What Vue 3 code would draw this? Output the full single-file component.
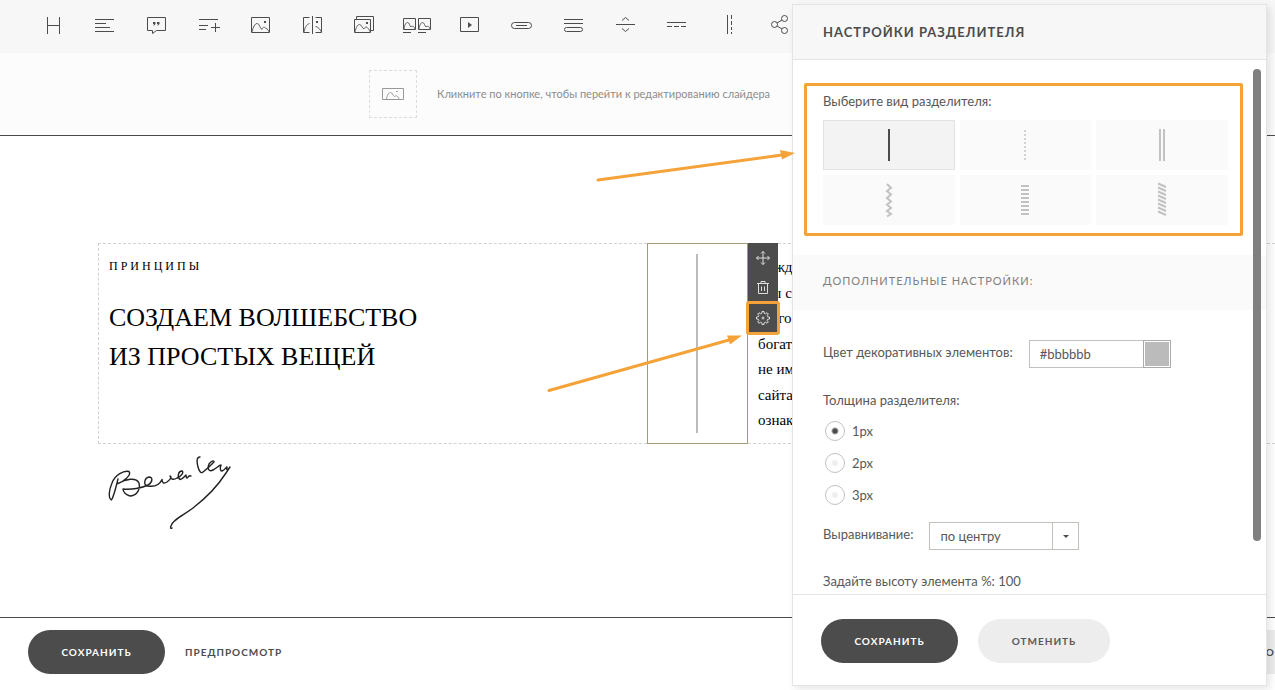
<script setup>
import { ref } from 'vue'

const tools = [
  { name: 'Заголовок', d: 'M10.5 4V21M22.5 4V21M10.5 12.5H22.5' },
  { name: 'Текст', d: 'M6 6.5H25M6 10.5H17M6 14.5H21M6 18.5H25' },
  { name: 'Цитата', d: 'M6.5 4.5H24.5V17.5H15.5L11.5 20.5V17.5H6.5Z', fill: 'M12 9H14.500V11L12.6 13L12.8 11H12ZM16 9H18.500V11L16.6 13L16.8 11H16Z' },
  { name: 'Список', d: 'M6 6.5H25M6 12.5H15M6 16.5H13M18 14.5H27M22.5 10V19' },
  { name: 'Картинка', d: 'M6.5 4.5H24.5V19.5H6.5Z', soft: 'M7 19C8 14 10 10.5 12 10.5C14.500 10.5 15 15.500 17 16.500C17.500 14.500 19 13.500 20.500 15C22.500 16 24 17.500 24 19', fill: 'M19 8H21V10H19Z' },
  { name: 'Сравнение', d: 'M12.500 4.5H6.5V19.5H12.500M15.5 3V21M18.500 4.5H24.500V19.5H18.500', soft: 'M7 19C8 14 9.500 11.500 12.500 10.500M18.500 13.500C21 13.500 23 16.500 24.500 19', fill: 'M19 8H21V10H19Z' },
  { name: 'Галерея', d: 'M5.5 6.5H21.5V19.5H5.5ZM7.5 6V3.5H24.5V17.5H22', soft: 'M6 19C7 14.500 8.500 11.500 10.500 11.500C12.500 11.500 13 15 15 16C16 13.500 18 13.500 19 15.500C20 16 21 17.500 21 19', fill: 'M17 9H19V11H17Z' },
  { name: 'Коллаж', d: 'M2.5 5.5H14.5V16.5H2.5ZM17.5 5.5H29.500V16.5H17.5ZM2 19.5H10M17 19.5H25', soft: 'M3 16C3.500 12 5 9.500 6.500 9.500C8.500 9.500 8.500 13 10 14C11.500 12.500 13.500 13.500 14 16M18 16C18.500 12 20 9.500 21.500 9.500C23.500 9.500 23.500 13 25 14C26.500 12.500 28.500 13.500 29 16' },
  { name: 'Видео', d: 'M7.5 4.5H25.5V18.5H7.5Z', fill: 'M15 9L19 12L15 15Z' },
  { name: 'Кнопка', d: 'M9.500 9.5H23.500A3 3 0 0 1 23.500 15.5H9.500A3 3 0 0 1 9.500 9.5ZM11 12.5H22' },
  { name: 'Аккордеон', d: 'M7 6.5H26M7 10.5H26M9.500 14.5H23.500A2 2 0 0 1 23.500 18.500H9.500A2 2 0 0 1 9.500 14.500Z' },
  { name: 'Отступ', d: 'M7 11.5H26M13 7.500L16.5 4.500L20 7.500M13 15.5L16.5 18.500L20 15.5' },
  { name: 'Горизонтальный разделитель', d: 'M6 9.5H25M6 13.5H11M13 13.5H18M20 13.5H25' },
  { name: 'Вертикальный разделитель', d: 'M14.5 2V21M18.5 2V6M18.500 8V12M18.5 14V17M18.5 19V21' },
  { name: 'Поделиться', d: 'M6.500 11.5A3 3 0 1 0 12.500 11.5A3 3 0 1 0 6.500 11.500M16.500 5.500A3 3 0 1 0 22.500 5.500A3 3 0 1 0 16.500 5.500M16.500 17.500A3 3 0 1 0 22.500 17.500A3 3 0 1 0 16.500 17.500M12 10L17 7M12 13L17 16' },
]

const dividers = [
  { id: 'solid', name: 'Сплошной', d: 'M12 2V34', w: 2 },
  { id: 'dotted', name: 'Точечный', d: 'M12 3V34', w: 2, dash: '2 2' },
  { id: 'double', name: 'Двойной', d: 'M10 2V34M14 2V34', w: 2 },
  { id: 'zigzag', name: 'Зигзаг', d: 'M10 2L14 6L10 9L14 12.500L10 16L14 19.500L10 22.500L14 26L10 29L14 32L10 34.500', w: 2 },
  { id: 'dashes', name: 'Штрихи', d: 'M12 3V34', w: 8, dash: '2 2' },
  { id: 'slanted', name: 'Наклонные штрихи', d: 'M8 1.500L16 5M8 5.500L16 9M8 9.500L16 13M8 13.500L16 17M8 17.500L16 21M8 21.500L16 25M8 25.500L16 29M8 29.500L16 33', w: 2 },
]

const kind = ref('solid')
const color = ref('#bbbbbb')
const thickness = ref('1px')
const align = ref('center')
const height = ref(100)
const lines = ['Кажд', 'Мы с', 'этого', 'богат', 'не им', 'сайта', 'ознак']
</script>

<template>
  <div class="page">
    <nav class="toolbar">
      <button v-for="t in tools" :key="t.name" type="button" class="tool" :aria-label="t.name">
        <svg width="32" height="24" viewBox="0 0 32 24">
          <path v-if="t.soft" class="soft" :d="t.soft" />
          <path class="line" :d="t.d" />
          <path v-if="t.fill" class="solid" :d="t.fill" />
        </svg>
      </button>
    </nav>

    <section class="slider">
      <button type="button" class="slide-btn" aria-label="Слайдер">
        <svg width="24" height="14" viewBox="0 0 24 14">
          <path d="M1.500 1.500H22.500V12.500H1.500Z" />
          <path d="M5.500 12C6 8 8 5.500 9.500 5.500C11.500 5.500 11.500 8.500 13.500 9.500C15 8 17 9 18 12" />
          <path d="M15 4.500H17" />
        </svg>
      </button>
      <p>Кликните по кнопке, чтобы перейти к редактированию слайдера</p>
    </section>

    <main class="canvas">
      <div class="row">
        <div class="col intro">
          <p class="kicker">ПРИНЦИПЫ</p>
          <h1>СОЗДАЕМ ВОЛШЕБСТВО<br>ИЗ ПРОСТЫХ ВЕЩЕЙ</h1>
        </div>
        <div class="col divider">
          <span class="rule"></span>
          <div class="menu">
            <button type="button" aria-label="Переместить">
              <svg width="16" height="16" viewBox="0 0 16 16"><path d="M8 1.500V14.500M1.500 8H14.500M6 3.500L8 1.500L10 3.500M6 12.500L8 14.500L10 12.500M3.500 6L1.500 8L3.500 10M12.500 6L14.500 8L12.500 10" /></svg>
            </button>
            <button type="button" aria-label="Удалить">
              <svg width="16" height="16" viewBox="0 0 16 16"><path d="M2 3.500H14M6 3V1.500H10V3M3.500 4V13.500H12.500V4M6.500 6.500V11M9.500 6.500V11" /></svg>
            </button>
            <button type="button" class="marked" aria-label="Настройки">
              <svg width="16" height="16" viewBox="0 0 16 16">
                <path d="M6.800 3.300L7 1.500H9L9.200 3.300L10.500 3.800L12 2.700L13.300 4L12.200 5.500L12.700 6.800L14.500 7V9L12.700 9.200L12.200 10.500L13.300 12L12 13.300L10.500 12.200L9.200 12.700L9 14.500H7L6.800 12.700L5.500 12.200L4 13.300L2.700 12L3.800 10.500L3.300 9.200L1.500 9V7L3.300 6.800L3.800 5.500L2.700 4L4 2.700L5.500 3.800Z" />
                <circle cx="8" cy="8" r="1" />
              </svg>
            </button>
          </div>
        </div>
        <div class="col story">
          <p v-for="l in lines" :key="l">{{ l }}</p>
        </div>
      </div>
      <svg class="signature" width="128" height="80" viewBox="0 0 128 80" role="img" aria-label="Beverley">
        <path d="M11 25C9 33 7 42 4.500 46C1 44 2 36 5 29C8 21 17 16 22 17.500C25 21 16 28 11 29.500C19 25 29 23 32 29C34 37 28 42 23 42C19 41 16 38 16 35C24 36 35 34 41 31C46 28 46 23 42 23C37 24 36 32 41 32C48 33 53 30 55 25.500C55 29 57 30 60 28C64 25 65 23 63 22C64 26 67 26 70 24C75 22 77 18 75 17C71 17 70 23 73 25.500C76 25 78 22 79 21C79 24 80 25 81 23C83 21 83 22 84 22" />
        <path d="M93 3C89 3 90 9 91 13C92 17 94 20 96 18C100 15 104 11 107 8C107 6 104 7 102 10C100 15 102 18 106 16C110 14 112 11 114 11C113 14 113 17 115 17C118 16 119 13 120 13C119 17 121 16 123 13L119 19C110 33 99 44 86 54C77 61 65 66 64 72C63 74 64 75 65 74" />
      </svg>
    </main>

    <footer class="bottom">
      <button type="button" class="pill dark">СОХРАНИТЬ</button>
      <button type="button" class="preview">ПРЕДПРОСМОТР</button>
      <button type="button" class="edge">НО</button>
    </footer>

    <aside class="panel">
      <header><h2>НАСТРОЙКИ РАЗДЕЛИТЕЛЯ</h2></header>
      <div class="body">
        <fieldset class="kinds" aria-labelledby="kinds-label">
          <p id="kinds-label">Выберите вид разделителя:</p>
          <div class="cards">
            <label v-for="k in dividers" :key="k.id" class="card" :class="{ active: kind === k.id, faint: k.id === 'dotted' }">
              <input v-model="kind" type="radio" name="kind" :value="k.id" :aria-label="k.name">
              <svg width="24" height="36" viewBox="0 0 24 36">
                <path :d="k.d" :stroke-width="k.w" :stroke-dasharray="k.dash" />
              </svg>
            </label>
          </div>
        </fieldset>

        <h3>ДОПОЛНИТЕЛЬНЫЕ НАСТРОЙКИ:</h3>

        <div class="fields">
          <div class="field">
            <label for="color">Цвет декоративных элементов:</label>
            <div class="color">
              <input id="color" v-model="color" type="text">
              <button type="button" class="swatch" aria-label="Выбрать цвет"><span :style="{ background: color }"></span></button>
            </div>
          </div>

          <fieldset class="thickness" aria-labelledby="thick-label">
            <p id="thick-label">Толщина разделителя:</p>
            <label v-for="n in ['1px', '2px', '3px']" :key="n">
              <input v-model="thickness" type="radio" name="thickness" :value="n">{{ n }}
            </label>
          </fieldset>

          <div class="field">
            <label for="align">Выравнивание:</label>
            <div class="select">
              <select id="align" v-model="align">
                <option value="center">по центру</option>
              </select>
              <span class="caret"></span>
            </div>
          </div>

          <p class="height">Задайте высоту элемента %: {{ height }}</p>
        </div>
      </div>
      <span class="scrollbar"></span>
      <footer>
        <button type="button" class="pill dark">СОХРАНИТЬ</button>
        <button type="button" class="pill light">ОТМЕНИТЬ</button>
      </footer>
    </aside>

    <svg class="arrows" width="260" height="260" viewBox="540 140 260 260" aria-hidden="true">
      <path class="shaft" d="M598 180L782 155M549 390.500L729 340" />
      <path class="head" d="M795 153L780 150L782 159.500ZM742 335.500L727 335.500L730 344.500Z" />
    </svg>
  </div>
</template>

<style>
body { margin: 0; background: #fff; }
</style>

<style scoped>
* { box-sizing: border-box; }
p, h1, h2, h3 { margin: 0; font-weight: 400; }
button, input, select { font: inherit; color: inherit; margin: 0; padding: 0; border: 0; background: none; }
fieldset { margin: 0; padding: 0; border: 0; min-width: 0; }
svg { display: block; fill: none; flex: none; }
.page {
  position: relative;
  display: flex;
  flex-direction: column;
  min-height: 100vh;
  overflow: hidden;
  font-family: Lato, "Open Sans", sans-serif;
  font-size: 13px;
  line-height: 20px;
  color: #4c4c4c;
}
.toolbar { display: flex; height: 53px; padding: 0 27px; background: #f7f7f7; }
.tool { flex: none; width: 52px; height: 50px; display: flex; align-items: center; justify-content: center; }
.line { stroke: #4c4c4c; }
.soft { stroke: #5c5c5c; }
.solid { fill: #4c4c4c; }

.slider {
  display: flex;
  align-items: center;
  gap: 20px;
  height: 83px;
  padding-left: 369px;
  background: #fcfcfc;
  border-bottom: 1px solid #4c4c4c;
  font-size: 11px;
  color: #8c8c8c;
}
.slide-btn { display: flex; align-items: center; justify-content: center; width: 48px; height: 48px; border: 1px dashed #ddd; }
.slide-btn svg { stroke: #999; }

.canvas { flex: 1; padding: 107px 0 0 98px; font-family: "Liberation Serif", serif; color: #000; }
.row { display: grid; grid-template-columns: 549fr 101px 527fr; height: 201px; }
.col { border: 1px dashed #d2d2d2; border-width: 1px 0; }
.intro { border-left-width: 1px; padding: 12px 10px; }
.kicker { font-size: 12px; letter-spacing: 3px; }
.intro h1 { margin-top: 22px; font-size: 26px; line-height: 39px; }
.divider { position: relative; display: flex; justify-content: center; padding: 10px 2px 10px 0; border: 1px solid #a39b78; }
.rule { width: 2px; background: #bbb; }
.menu { position: absolute; top: -1px; left: calc(100% + 1px); width: 30px; background: #4c4c4c; }
.menu button { display: flex; align-items: center; justify-content: center; width: 30px; height: 30px; }
.menu svg { stroke: #ddd; }
.menu .marked { outline: 3px solid #f5a339; outline-offset: -1px; border-radius: 1px; background: #4c4c4c; }
.story { padding: 11px 10px 0; font-size: 15px; line-height: 1.7; overflow: hidden; }
.signature { margin: 10px 0 0 9px; stroke: #222; stroke-width: 1.4; stroke-linecap: round; stroke-linejoin: round; }

.bottom { display: flex; align-items: center; gap: 20px; height: 73px; padding-left: 28px; border-top: 1px solid #4c4c4c; padding-bottom: 4px; }
.pill, .preview, .edge { font-size: 10px; font-weight: 700; letter-spacing: 1px; }
.pill { height: 44px; border-radius: 22px; }
.dark { width: 137px; background: #4c4c4c; color: #fff; }
.light { width: 132px; background: #ededed; color: #5a5a5a; }
.edge { width: 60px; height: 44px; margin-left: auto; padding-left: 42px; overflow: hidden; background: #ededed; text-align: left; }

.panel {
  position: absolute;
  top: 4px;
  right: 8px;
  bottom: 4px;
  width: 475px;
  display: flex;
  flex-direction: column;
  border: 1px solid #e4e4e4;
  background: #fff;
  box-shadow: 3px 3px 8px rgba(0, 0, 0, 0.1);
}
.panel header { display: flex; align-items: center; height: 55px; padding-left: 30px; background: #f7f7f7; border-bottom: 1px solid #e4e4e4; }
.panel h2 { font-size: 13px; font-weight: 700; letter-spacing: 1px; }
.body { flex: 1; min-height: 0; overflow: hidden; color: #585858; }
.kinds { margin: 23px 23px 19px 11px; padding: 5px 12px 8px 16px; border: 3px solid #f5a339; border-radius: 2px; }
.cards { display: grid; grid-template-columns: repeat(3, 1fr); gap: 5px; margin-top: 9px; }
.card { position: relative; display: flex; align-items: center; justify-content: center; height: 50px; background: #fafafa; }
.card input { position: absolute; inset: 0; width: 100%; height: 100%; opacity: 0; }
.card svg { stroke: #c2c2c2; }
.card.faint svg { stroke: #d2d2d2; }
.card.active { background: #f3f3f3; border: 1px solid #e2e2e2; }
.card.active svg { stroke: #4c4c4c; }
.panel h3 { height: 55px; padding-left: 30px; background: #fafafa; font-size: 11px; line-height: 52px; letter-spacing: 1px; color: #808080; }
.fields { padding: 30px 30px 0; }
.field { display: flex; gap: 16px; }
.field > label { line-height: 24px; }
.color { display: flex; width: 142px; height: 28px; border: 1px solid #c2c2bc; }
.color input { flex: 1; min-width: 0; padding-left: 10px; }
.swatch { width: 28px; margin: -1px; padding: 1px; border: 1px solid #aaa; }
.swatch span { display: block; height: 100%; }
.thickness { display: flex; flex-direction: column; margin: 22px 0 17px; }
.thickness label { display: flex; align-items: center; gap: 7px; height: 20px; margin: 0 0 12px 2px; }
.thickness p { margin-bottom: 11px; }
.thickness label:last-child { margin-bottom: 0; }
.thickness input { appearance: none; width: 20px; height: 20px; border: 1px solid #c2c2bc; border-radius: 50%; background: radial-gradient(circle, #eee 2px, #fff 4px); }
.thickness input:checked { background: radial-gradient(circle, #4c4c4c 2px, #fff 4px); }
.select { position: relative; width: 150px; height: 28px; border: 1px solid #c2c2bc; }
.select select { appearance: none; width: 100%; height: 100%; padding-left: 10px; }
.caret { position: absolute; top: 0; right: 0; bottom: 0; width: 26px; display: flex; align-items: center; justify-content: center; border-left: 1px solid #c2c2bc; pointer-events: none; }
.caret::after { content: ""; border: 3px solid transparent; border-top-color: #4c4c4c; border-bottom: 0; }
.height { margin-top: 21px; }
.scrollbar { position: absolute; top: 64px; right: 5px; width: 8px; height: 472px; border-radius: 4px; background: #808080; }
.panel footer { display: flex; gap: 20px; height: 91px; padding: 24px 28px; border-top: 1px solid #e4e4e4; }
.arrows { position: absolute; top: 140px; left: 540px; pointer-events: none; }
.shaft { stroke: #f5a339; stroke-width: 3; stroke-linecap: round; }
.head { fill: #f5a339; }
</style>
